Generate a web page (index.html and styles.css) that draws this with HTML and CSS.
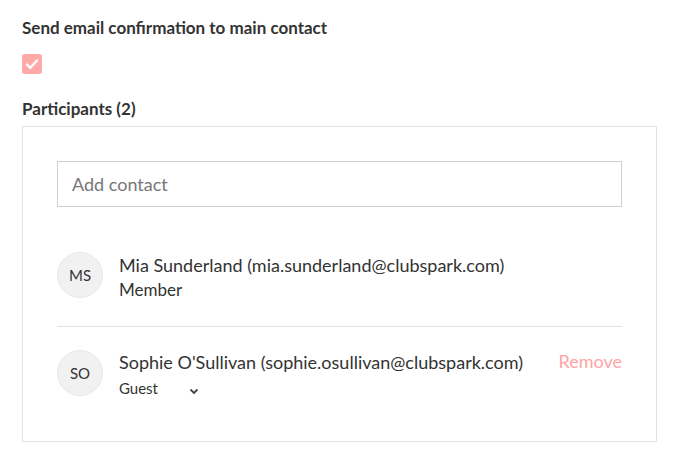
FILE: index.html
```html
<!DOCTYPE html>
<html>
<head>
<meta charset="utf-8">
<link rel="stylesheet" href="styles.css">
</head>
<body>
<div class="page">
  <div class="label">Send email confirmation to main contact</div>
  <div class="checkbox">
    <svg width="14" height="12" viewBox="0 0 14 12"><path d="M2 6.5 L5.3 9.8 L12 2.5" fill="none" stroke="#fff" stroke-width="2.4" stroke-linecap="round" stroke-linejoin="round"/></svg>
  </div>
  <div class="label participants">Participants (2)</div>
  <div class="panel">
    <div class="input">Add contact</div>
    <div class="row">
      <div class="avatar">MS</div>
      <div class="info">
        <div class="name">Mia Sunderland (mia.sunderland@clubspark.com)</div>
        <div class="role">Member</div>
      </div>
    </div>
    <div class="row last">
      <div class="avatar">SO</div>
      <div class="info">
        <div class="name">Sophie O'Sullivan (sophie.osullivan@clubspark.com)</div>
        <div class="select">
          <span>Guest</span>
          <svg width="10" height="7" viewBox="0 0 10 7"><path d="M1.5 1.5 L5 5 L8.5 1.5" fill="none" stroke="#444" stroke-width="1.8"/></svg>
        </div>
      </div>
      <div class="remove">Remove</div>
    </div>
  </div>
</div>
</body>
</html>
```

FILE: styles.css
```css
* { box-sizing: border-box; }
body {
  margin: 0;
  font-family: Lato, "Open Sans", sans-serif;
  color: #333;
  background: #fff;
}
.page {
  padding: 16px 38px 0 22px;
}
.label {
  font-weight: bold;
  font-size: 17px;
  line-height: 24px;
}
.checkbox {
  width: 20px;
  height: 20px;
  margin-top: 14px;
  border-radius: 3px;
  background: #ffa9a9;
  display: flex;
  align-items: center;
  justify-content: center;
}
.participants {
  margin-top: 23px;
}
.panel {
  margin-top: 5px;
  border: 1px solid #e2e2e2;
  padding: 34px 34px 37px;
}
.input {
  height: 46px;
  border: 1px solid #d0d0d0;
  padding: 0 14px;
  font-size: 18px;
  color: #777;
  display: flex;
  align-items: center;
}
.row {
  display: flex;
  align-items: flex-start;
  padding: 23px 0 24px;
  margin-top: 22px;
  border-bottom: 1px solid #e2e2e2;
}
.row.last {
  border-bottom: none;
  margin-top: 0;
  padding-bottom: 0;
}
.avatar {
  width: 46px;
  height: 46px;
  border-radius: 50%;
  background: #f1f1f1;
  border: 1px solid #e8e8e8;
  display: flex;
  align-items: center;
  justify-content: center;
  font-size: 15px;
  color: #333;
  flex: none;
}
.info {
  margin-left: 16px;
  flex: 1;
  padding-top: 1px;
}
.row.last .info { padding-top: 0; }
.name {
  font-size: 18px;
  line-height: 24px;
}
.role {
  font-size: 17px;
  line-height: 25px;
}
.select {
  display: flex;
  align-items: center;
  height: 30px;
  font-size: 15px;
}
.select span { width: 70px; margin-top: -2px; }
.select svg { margin-top: 4px; }
.remove {
  color: #ffa3a3;
  font-size: 18px;
  line-height: 24px;
  margin-top: -1px;
}
```
